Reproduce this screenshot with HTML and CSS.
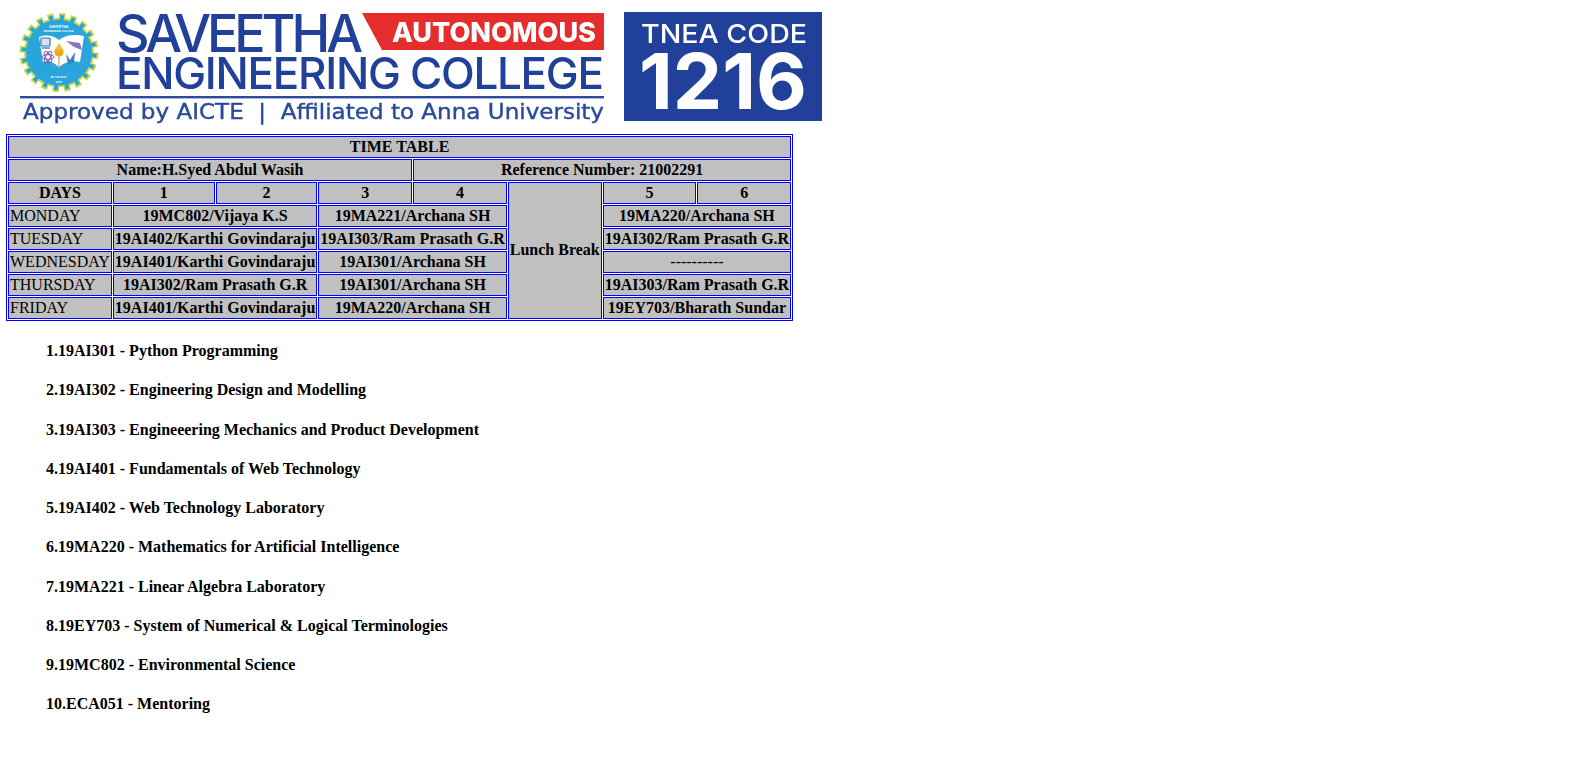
FILE: index.html
```html
<!DOCTYPE html>
<html lang="en">
<head>
<meta charset="utf-8">
<title>Time Table</title>
<link rel="stylesheet" href="styles.css">
</head>
<body>
<header class="banner">
<svg class="logo" viewBox="20 12 584 112" width="584" height="112" role="img" aria-label="Saveetha Engineering College">
  <circle cx="59" cy="52.5" r="35" fill="#c9d845"/>
  <circle cx="59" cy="52.5" r="36.5" fill="none" stroke="#c9d845" stroke-width="6" pathLength="200" stroke-dasharray="5.5 4.5"/>
  <circle cx="59" cy="52.5" r="33" fill="#2aa5dc"/>
  <circle cx="59" cy="52.5" r="35" fill="none" stroke="#2aa5dc" stroke-width="5" pathLength="200" stroke-dasharray="3.5 6.5" stroke-dashoffset="-1"/>
  <path d="M39 37 Q50 33 59 40 Q68 33 84 36 L80 62 Q68 59 59 67 Q50 59 43 62 Z" fill="#fff"/>
  <path d="M59 46 V68" stroke="#c9a83a" stroke-width="1.2"/>
  <circle cx="59" cy="52" r="4.6" fill="#f3a51f"/>
  <path d="M59 43 L63 50 H55 Z" fill="#f3c21f"/>
  <rect x="41" y="38" width="9" height="8" rx="1" fill="#cfe6f4" stroke="#2c6fb5" stroke-width="1.2"/>
  <path d="M42 48 H50" stroke="#2c6fb5" stroke-width="1.2"/>
  <g fill="none" stroke="#7b4fa3" stroke-width=".9">
    <ellipse cx="48" cy="57" rx="6" ry="2.4"/>
    <ellipse cx="48" cy="57" rx="6" ry="2.4" transform="rotate(60 48 57)"/>
    <ellipse cx="48" cy="57" rx="6" ry="2.4" transform="rotate(120 48 57)"/>
  </g>
  <path d="M66 41 L80 43 L82 50 L74 47 Z" fill="#8b78b8"/>
  <path d="M66 54 L70 60 L75 52 L74 63 L68 64 Z" fill="#3d7fc4"/>
  <text class="seal-title" x="59" y="28" text-anchor="middle">SAVEETHA</text>
  <text class="seal-sub" x="59" y="32" text-anchor="middle">ENGINEERING COLLEGE</text>
  <text class="seal-sub" x="59" y="78" text-anchor="middle">BE THE BEST</text>
  <text class="seal-sub" x="59" y="82.5" text-anchor="middle">2001</text>

  <text class="name-top" x="116" y="52" textLength="247">SAVEETHA</text>
  <polygon points="362,13 604,13 604,50 382,50" fill="#e52d2d"/>
  <text class="auto" x="392" y="41.5" textLength="204" lengthAdjust="spacingAndGlyphs">AUTONOMOUS</text>
  <text class="name-bottom" x="116" y="89" textLength="488">ENGINEERING COLLEGE</text>
  <rect x="20" y="96" width="584" height="2.4" fill="#2b4a9b"/>
  <text class="tagline" x="23" y="119" textLength="581" lengthAdjust="spacingAndGlyphs">Approved by AICTE  |  Affiliated to Anna University</text>
</svg>
<svg class="code" viewBox="623 12 198 109" width="198" height="109" role="img" aria-label="TNEA Code 1216">
  <rect x="623" y="12" width="198" height="109" fill="#21409a"/>
  <text class="tnea" x="640" y="42.5" textLength="166" lengthAdjust="spacingAndGlyphs">TNEA CODE</text>
  <text class="num" x="638" y="109" textLength="168" lengthAdjust="spacingAndGlyphs">1216</text>
</svg>
</header>
<table class="timetable" cellspacing="1">
  <tr><th colspan="8">TIME TABLE</th></tr>
  <tr><th colspan="4">Name:H.Syed Abdul Wasih</th><th colspan="4">Reference Number: 21002291</th></tr>
  <tr><th>DAYS</th><th class="c1">1</th><th class="c2">2</th><th class="c3">3</th><th class="c4">4</th><th class="lunch" rowspan="6">Lunch Break</th><th class="c5">5</th><th class="c6">6</th></tr>
  <tr><td>MONDAY</td><th colspan="2">19MC802/Vijaya K.S</th><th colspan="2">19MA221/Archana SH</th><th colspan="2">19MA220/Archana SH</th></tr>
  <tr><td>TUESDAY</td><th colspan="2">19AI402/Karthi Govindaraju</th><th colspan="2">19AI303/Ram Prasath G.R</th><th colspan="2">19AI302/Ram Prasath G.R</th></tr>
  <tr><td>WEDNESDAY</td><th colspan="2">19AI401/Karthi Govindaraju</th><th colspan="2">19AI301/Archana SH</th><th class="dash" colspan="2">----------</th></tr>
  <tr><td>THURSDAY</td><th colspan="2">19AI302/Ram Prasath G.R</th><th colspan="2">19AI301/Archana SH</th><th colspan="2">19AI303/Ram Prasath G.R</th></tr>
  <tr><td>FRIDAY</td><th colspan="2">19AI401/Karthi Govindaraju</th><th colspan="2">19MA220/Archana SH</th><th colspan="2">19EY703/Bharath Sundar</th></tr>
</table>
<section class="courses">
  <h4>1.19AI301 - Python Programming</h4>
  <h4>2.19AI302 - Engineering Design and Modelling</h4>
  <h4>3.19AI303 - Engineeering Mechanics and Product Development</h4>
  <h4>4.19AI401 - Fundamentals of Web Technology</h4>
  <h4>5.19AI402 - Web Technology Laboratory</h4>
  <h4>6.19MA220 - Mathematics for Artificial Intelligence</h4>
  <h4>7.19MA221 - Linear Algebra Laboratory</h4>
  <h4>8.19EY703 - System of Numerical &amp; Logical Terminologies</h4>
  <h4>9.19MC802 - Environmental Science</h4>
  <h4>10.ECA051 - Mentoring</h4>
</section>
</body>
</html>
```
FILE: styles.css
```css
html, body { background: #fff; }
body {
  margin: 6px;
  font-family: "Liberation Serif", "Times New Roman", serif;
  font-size: 16px;
  color: #000;
}
.banner {
  display: flex;
  gap: 20px;
  padding: 6px 0 10px 14px;
  height: 112px;
}
.banner svg { display: block; flex: none; overflow: visible; filter: blur(0.35px); }
.logo text, .code text { font-family: "Inter", "Open Sans", sans-serif; }
.seal-title { font-size: 3.6px; font-weight: 700; fill: #fff; }
.seal-sub { font-size: 2.6px; font-weight: 700; fill: #fff; }
.name-top { font-size: 52px; font-weight: 500; fill: #21409a; }
.name-bottom { font-size: 44px; font-weight: 500; fill: #21409a; }
.auto { font-size: 27px; font-weight: 800; fill: #fff; }
.logo .tagline {
  font-family: "DejaVu Sans", sans-serif;
  font-size: 21px;
  fill: #2b4a9b;
  stroke: #2b4a9b;
  stroke-width: 0.4px;
  white-space: pre;
}
.tnea { font-size: 26px; font-weight: 500; fill: #fff; }
.num { font-size: 77px; font-weight: 700; fill: #fff; }

.timetable {
  border: 1px solid #00f;
  border-spacing: 1px;
  border-collapse: separate;
}
.timetable th, .timetable td {
  border: 1px solid #00f;
  background: #c0c0c0;
  padding: 1px;
}
.timetable th { text-align: center; font-weight: 700; }
.timetable td { text-align: left; font-weight: 400; }
.timetable .dash { font-weight: 400; }
.timetable .lunch { padding-bottom: 3px; }

.courses { margin: -0.25px 0 0 40px; }
.courses h4 { margin: 21.28px 0; font-size: 16px; font-weight: 700; }
```
